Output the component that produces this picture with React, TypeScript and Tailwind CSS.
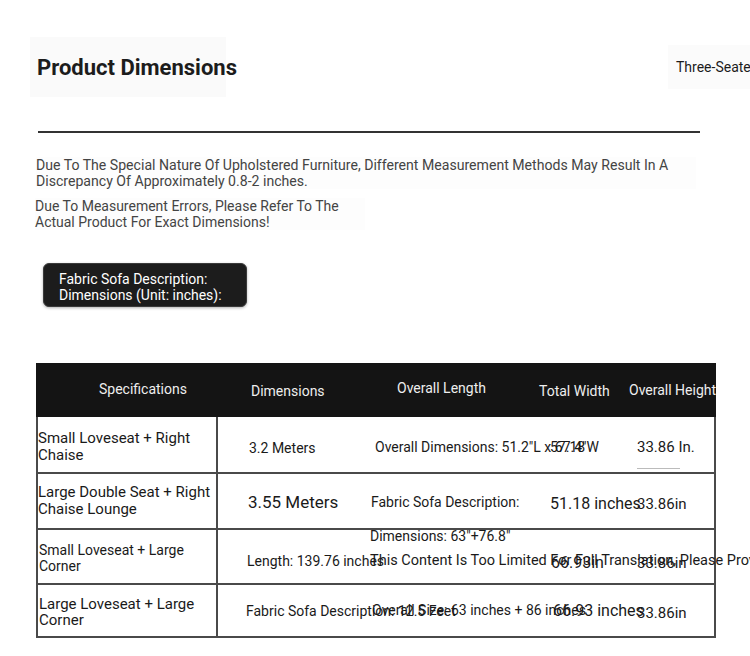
import React from "react";

function Row({
  h,
  c1,
  c1pl,
  children,
}: {
  h: string;
  c1: React.ReactNode;
  c1pl: string;
  children: React.ReactNode;
}) {
  return (
    <div className={`flex items-stretch border-b-2 border-[#4a4a4a] ${h}`}>
      <div className={`w-[180px] shrink-0 border-r-2 border-[#4a4a4a] flex items-center ${c1pl}`}>
        {c1}
      </div>
      {children}
    </div>
  );
}

export default function App() {
  return (
    <div className="w-[750px] h-[656px] overflow-hidden bg-white text-[#1a1a1a] font-[Roboto,'Liberation_Sans',sans-serif]">
      {/* Title row */}
      <div className="flex pt-[37px]">
        <div className="ml-[30px] w-[196px] h-[60px] shrink-0 bg-[#fafafa] flex items-center pl-[7px] whitespace-nowrap text-[22px] font-bold text-[#1c1c1c]">
          Product Dimensions
        </div>
        <div className="ml-[442px] w-[82px] h-[44px] mt-[8px] shrink-0 bg-[#fbfbfb] flex items-center pl-[8px] whitespace-nowrap text-[14px] font-normal text-[#1c1c1c]">
          Three-Seater
        </div>
      </div>

      <div className="ml-[38px] mt-[34px] w-[662px] h-[2px] bg-[#333]" />

      <p className="ml-[36px] mt-[24px] w-[660px] text-[14.1px] leading-[16px] text-[#444] bg-[#fdfdfd]">
        Due To The Special Nature Of Upholstered Furniture, Different Measurement Methods May Result In A Discrepancy Of Approximately 0.8-2 inches.
      </p>
      <p className="ml-[35px] mt-[9px] w-[330px] text-[14px] leading-[16px] text-[#444] bg-[#fdfdfd]">
        Due To Measurement Errors, Please Refer To The Actual Product For Exact Dimensions!
      </p>

      <div className="ml-[43px] mt-[33px] w-[204px] h-[44px] rounded-[6px] bg-[#1c1c1c] border border-[#3a3a3a] shadow-[0_1px_3px_rgba(0,0,0,0.3)] pl-[15px] pt-[7px] text-[14px] leading-[16px] text-white">
        <div>Fabric Sofa Description:</div>
        <div>Dimensions (Unit: inches):</div>
      </div>

      {/* Table */}
      <div className="ml-[36px] mt-[56px] w-[680px]">
        <div className="h-[54px] bg-[#141414] flex items-center overflow-hidden whitespace-nowrap text-[14px] font-normal text-[#eeeeee]">
          <div className="w-[215px] shrink-0 pl-[63px] -mt-[2px]">Specifications</div>
          <div className="w-[146px] shrink-0 mt-[2px]">Dimensions</div>
          <div className="w-[142px] shrink-0 -mt-[4px]">Overall Length</div>
          <div className="w-[90px] shrink-0 mt-[2px]">Total Width</div>
          <div className="shrink-0">Overall Height</div>
        </div>

        <div className="border-x-2 border-[#4a4a4a] whitespace-nowrap">
          <Row
            h="h-[57px]"
            c1pl="pl-0"
            c1={
              <div className="text-[15px] leading-[17px] whitespace-normal pt-[4px]">
                Small Loveseat + Right
                <br />
                Chaise
              </div>
            }
          >
            <div className="w-[157px] shrink-0 pl-[31px] flex items-center pt-[8px] text-[14px]">3.2 Meters</div>
            <div className="w-[175px] shrink-0 flex items-center pt-[5px] text-[14px]">Overall Dimensions: 51.2"L x 67.4"W</div>
            <div className="w-[87px] shrink-0 flex items-center pt-[5px] text-[14px]">57.18</div>
            <div className="shrink-0 flex flex-col pt-[21px] text-[15px] leading-[18px]">
              <span>33.86 In.</span>
              <span className="mt-[12px] h-[1px] w-[43px] bg-[#bbbbbb]" />
            </div>
          </Row>

          <Row
            h="h-[56px]"
            c1pl="pl-0"
            c1={
              <div className="text-[15px] leading-[17px] whitespace-normal">
                Large Double Seat + Right
                <br />
                Chaise Lounge
              </div>
            }
          >
            <div className="w-[153px] shrink-0 pl-[30px] flex items-center pt-[3px] text-[17px]">3.55 Meters</div>
            <div className="w-[179px] shrink-0 flex items-center pt-[2px] text-[14px]">Fabric Sofa Description:</div>
            <div className="w-[87px] shrink-0 flex items-center pt-[5px] text-[16px]">51.18 inches</div>
            <div className="shrink-0 flex items-center pt-[6px] text-[15px]">33.86in</div>
          </Row>

          <Row
            h="h-[55px]"
            c1pl="pl-[1px]"
            c1={
              <div className="text-[14px] leading-[16px] whitespace-normal pt-[3px]">
                Small Loveseat + Large
                <br />
                Corner
              </div>
            }
          >
            <div className="w-[152px] shrink-0 pl-[29px] flex items-center pt-[10px] text-[14px]">Length: 139.76 inches</div>
            <div className="w-[181px] shrink-0 flex flex-col -mt-[2px] text-[14px] leading-[16px]">
              <span>Dimensions: 63"+76.8"</span>
              <span className="mt-[9px] text-[14.5px]">This Content Is Too Limited For Full Translation, Please Provide More Context.</span>
            </div>
            <div className="w-[86px] shrink-0 flex items-center pt-[13px] text-[16px]">66.93in</div>
            <div className="shrink-0 flex items-center pt-[13px] text-[15px]">33.86in</div>
          </Row>

          <Row
            h="h-[53px]"
            c1pl="pl-[1px]"
            c1={
              <div className="text-[15px] leading-[16px] whitespace-normal pt-[2px]">
                Large Loveseat + Large
                <br />
                Corner
              </div>
            }
          >
            <div className="w-[154px] shrink-0 pl-[28px] flex items-center pt-[1px] text-[14px]">Fabric Sofa Description: 12.5 Feet</div>
            <div className="w-[181px] shrink-0 flex items-center -mt-[1px] text-[14px]">Overall Size: 63 inches + 86 inches</div>
            <div className="w-[84px] shrink-0 flex items-center text-[16px]">66.93 inches</div>
            <div className="shrink-0 flex items-center pt-[5px] text-[15px]">33.86in</div>
          </Row>
        </div>
      </div>
    </div>
  );
}
